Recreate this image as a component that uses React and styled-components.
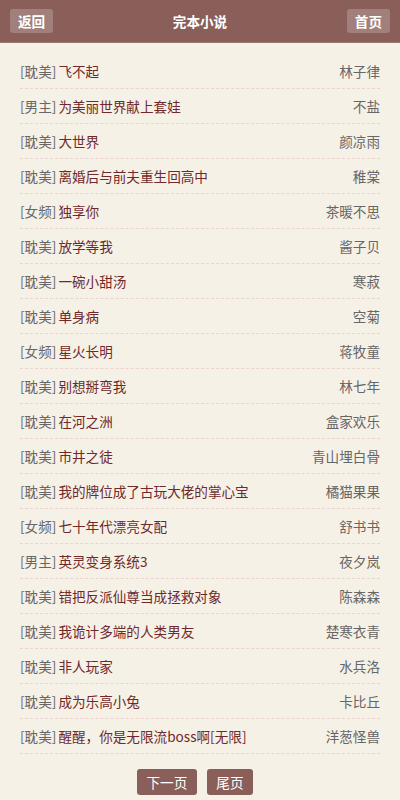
import React from 'react';
import styled, { createGlobalStyle } from 'styled-components';

const GlobalStyle = createGlobalStyle`
  body {
    margin: 0;
    background: #f6f1e7;
    font-family: "Microsoft YaHei", "Noto Sans CJK SC", "Liberation Sans", sans-serif;
  }
`;

const Page = styled.div`
  width: 400px;
  min-height: 800px;
  background: #f6f1e7;
`;

const Header = styled.header`
  height: 42px;
  background: #8a5f5a;
  border-bottom: 1px solid #9d7a70;
  display: flex;
  align-items: center;
  justify-content: space-between;
  padding: 0 10px;
`;

const HeadButton = styled.a`
  display: flex;
  align-items: center;
  justify-content: center;
  height: 24px;
  padding: 0 8px;
  border-radius: 3px;
  background: rgba(255, 255, 255, 0.2);
  color: #fff;
  font-size: 13.6px;
  font-weight: bold;
  text-decoration: none;
`;

const Title = styled.h1`
  margin: 0;
  color: #fff;
  font-size: 13.6px;
  font-weight: bold;
`;

const List = styled.ul`
  list-style: none;
  margin: 0;
  padding: 11px 20px 0;
`;

const Row = styled.li`
  height: 33px;
  padding-bottom: 1px;
  border-bottom: 1px dashed #ecd3d0;
  display: flex;
  align-items: center;
  justify-content: space-between;
  font-size: 13.6px;
`;

const Name = styled.span`
  color: #70292a;
`;

const Tag = styled.span`
  color: #666;
  margin-right: 2px;
`;

const Author = styled.span`
  color: #666;
`;

const Pager = styled.div`
  display: flex;
  justify-content: center;
  padding-top: 15px;
`;

// each button carries a right margin, so the pair sits a little left of centre
const PageButton = styled.a`
  display: flex;
  align-items: center;
  justify-content: center;
  height: 26px;
  padding: 0 9.5px;
  margin-right: 10px;
  border-radius: 3px;
  background: #8a5f5a;
  color: #fff;
  font-size: 13.6px;
  text-decoration: none;
`;

const books = [
  ['耽美', '飞不起', '林子律'],
  ['男主', '为美丽世界献上套娃', '不盐'],
  ['耽美', '大世界', '颜凉雨'],
  ['耽美', '离婚后与前夫重生回高中', '稚棠'],
  ['女频', '独享你', '茶暖不思'],
  ['耽美', '放学等我', '酱子贝'],
  ['耽美', '一碗小甜汤', '寒菽'],
  ['耽美', '单身病', '空菊'],
  ['女频', '星火长明', '蒋牧童'],
  ['耽美', '别想掰弯我', '林七年'],
  ['耽美', '在河之洲', '盒家欢乐'],
  ['耽美', '市井之徒', '青山埋白骨'],
  ['耽美', '我的牌位成了古玩大佬的掌心宝', '橘猫果果'],
  ['女频', '七十年代漂亮女配', '舒书书'],
  ['男主', '英灵变身系统3', '夜夕岚'],
  ['耽美', '错把反派仙尊当成拯救对象', '陈森森'],
  ['耽美', '我诡计多端的人类男友', '楚寒衣青'],
  ['耽美', '非人玩家', '水兵洛'],
  ['耽美', '成为乐高小兔', '卡比丘'],
  ['耽美', '醒醒，你是无限流boss啊[无限]', '洋葱怪兽'],
];

export default function App() {
  return (
    <Page>
      <GlobalStyle />
      <Header>
        <HeadButton href="#">返回</HeadButton>
        <Title>完本小说</Title>
        <HeadButton href="#">首页</HeadButton>
      </Header>
      <List>
        {books.map(([tag, name, author]) => (
          <Row key={name}>
            <span>
              <Tag>[{tag}]</Tag>
              <Name>{name}</Name>
            </span>
            <Author>{author}</Author>
          </Row>
        ))}
      </List>
      <Pager>
        <PageButton href="#">下一页</PageButton>
        <PageButton href="#">尾页</PageButton>
      </Pager>
    </Page>
  );
}
